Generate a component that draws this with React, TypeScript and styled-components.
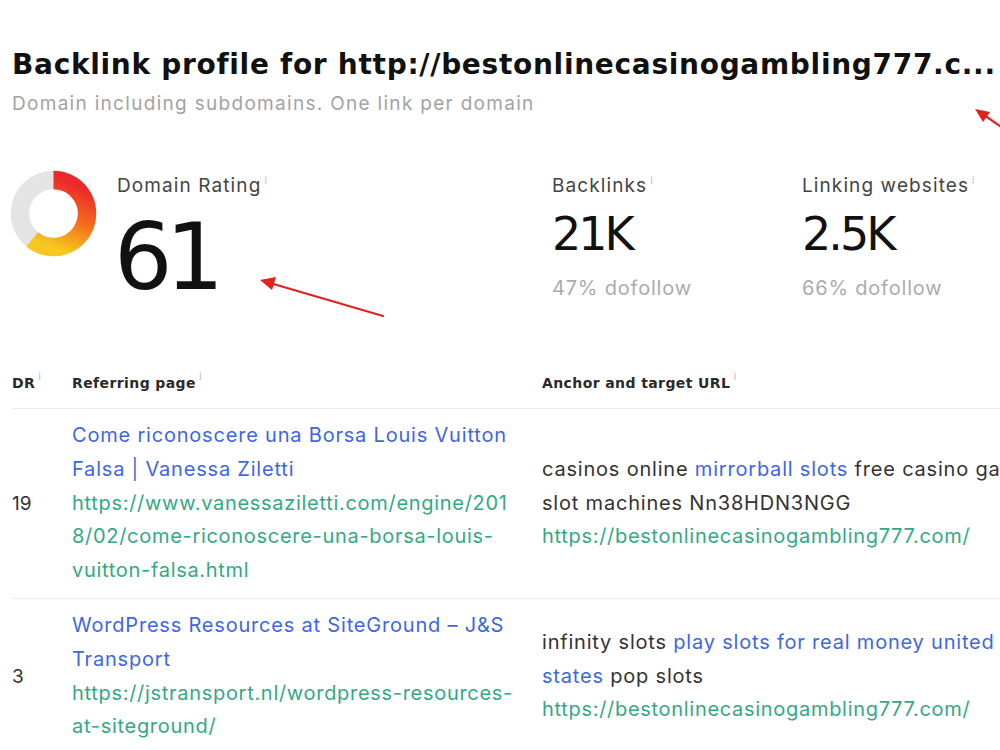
import React from 'react';
import styled, { createGlobalStyle } from 'styled-components';

const GlobalStyle = createGlobalStyle`
  html, body {
    margin: 0;
    padding: 0;
    background: #ffffff;
    overflow: hidden;
  }
  body {
    font-family: Inter, "Noto Sans", "Liberation Sans", sans-serif;
    color: #333333;
  }
`;

interface AnchorPart {
  text: string;
  link?: boolean;
}
interface BacklinkRow {
  dr: number;
  title: string;
  url: string;
  anchor: AnchorPart[];
  target: string;
}

const rows: BacklinkRow[] = [
  {
    dr: 19,
    title: 'Come riconoscere una Borsa Louis Vuitton Falsa | Vanessa Ziletti',
    url: 'https://www.vanessaziletti.com/engine/2018/02/come-riconoscere-una-borsa-louis-vuitton-falsa.html',
    anchor: [
      { text: 'casinos online ' },
      { text: 'mirrorball slots', link: true },
      { text: ' free casino games slot machines Nn38HDN3NGG' },
    ],
    target: 'https://bestonlinecasinogambling777.com/',
  },
  {
    dr: 3,
    title: 'WordPress Resources at SiteGround – J&S Transport',
    url: 'https://jstransport.nl/wordpress-resources-at-siteground/',
    anchor: [
      { text: 'infinity slots ' },
      { text: 'play slots for real money united states', link: true },
      { text: ' pop slots' },
    ],
    target: 'https://bestonlinecasinogambling777.com/',
  },
];

const Page = styled.div`
  position: relative;
  width: 1000px;
  height: 750px;
  padding: 45px 0 0 12px;
  box-sizing: border-box;
  overflow: hidden;
`;

const Title = styled.h1`
  margin: 0;
  font-family: "DejaVu Sans", Inter, sans-serif;
  font-size: 28px;
  font-weight: 700;
  line-height: 40px;
  color: #111111;
  white-space: nowrap;
  letter-spacing: 0.7px;
`;

const Subtitle = styled.p`
  margin: 0;
  font-size: 19px;
  line-height: 38px;
  letter-spacing: 1.3px;
  color: #a3a3a3;
`;

const Stats = styled.div`
  display: grid;
  grid-template-columns: 540px 250px 1fr;
  margin-top: 41px;
  height: 195px;
`;

const RatingBlock = styled.div`
  display: flex;
  gap: 20px;
  align-items: flex-start;
`;

const DonutWrap = styled.div`
  flex-shrink: 0;
  margin: 6px 0 0 -2px;
  width: 87px;
  height: 87px;
`;

const StatBlock = styled.div`
  display: flex;
  flex-direction: column;
`;

const StatLabel = styled.div`
  font-size: 19px;
  line-height: 32px;
  letter-spacing: 1.1px;
  color: #444444;
  white-space: nowrap;
`;

const Info = styled.sup`
  font-size: 10px;
  color: #bbbbbb;
  margin-left: 3px;
  vertical-align: 8px;
  letter-spacing: 0;
  font-weight: 400;
`;

const BigNumber = styled.div`
  font-family: "DejaVu Sans", sans-serif;
  font-size: 92px;
  line-height: 100px;
  letter-spacing: -7px;
  color: #111111;
  margin: 6px 0 0 -3px;
`;

const Number = styled.div`
  font-family: "DejaVu Sans", sans-serif;
  font-size: 46px;
  line-height: 52px;
  letter-spacing: -3px;
  color: #111111;
  margin-top: 6px;
`;

const SubValue = styled.div`
  font-size: 20px;
  line-height: 40px;
  letter-spacing: 0.8px;
  color: #ababab;
  margin-top: 8px;
`;

const Table = styled.div`
  width: 1047px;
`;

const Row = styled.div<{ header?: boolean }>`
  display: grid;
  grid-template-columns: 60px 470px 517px;
  align-items: center;
  border-bottom: 1px solid #ececec;
  padding: ${(p) => (p.header ? '8px 0 15px' : '10px 0 10px')};
`;

const HeadCell = styled.div`
  font-family: "DejaVu Sans", Roboto, sans-serif;
  font-size: 14px;
  font-weight: 700;
  letter-spacing: 0.4px;
  color: #2a2a2a;
  line-height: 20px;
  white-space: nowrap;
`;

const DrCell = styled.div`
  font-size: 19px;
  color: #333333;
`;

const TextCell = styled.div<{ last?: boolean }>`
  font-size: 20px;
  line-height: 33.8px;
  letter-spacing: 0.8px;
  padding-right: ${(p) => (p.last ? '2px' : '24px')};
  overflow-wrap: anywhere;
`;

const LinkTitle = styled.div`
  color: #3d67e3;
`;

const Url = styled.div`
  color: #33a985;
  letter-spacing: 0.7px;
`;

const AnchorText = styled.span<{ link?: boolean }>`
  color: ${(p) => (p.link ? '#3d67e3' : '#333333')};
`;

const Arrows = styled.svg`
  position: absolute;
  left: 0;
  top: 0;
  pointer-events: none;
`;

function Donut() {
  const cx = 43.5;
  const cy = 43.5;
  const r = 33.5;
  const angle = (61 / 100) * Math.PI * 2;
  const ex = cx + r * Math.sin(angle);
  const ey = cy - r * Math.cos(angle);
  return (
    <DonutWrap>
      <svg width="87" height="87" viewBox="0 0 87 87">
        <defs>
          <linearGradient id="drGrad" x1="0.55" y1="0" x2="0.25" y2="0.95">
            <stop offset="0" stopColor="#ea2a2a" />
            <stop offset="0.5" stopColor="#f66a1c" />
            <stop offset="1" stopColor="#f6c71f" />
          </linearGradient>
        </defs>
        <circle cx={cx} cy={cy} r={r} fill="none" stroke="#e4e4e4" strokeWidth="18.5" />
        <path
          d={`M ${cx} ${cy - r} A ${r} ${r} 0 1 1 ${ex} ${ey}`}
          fill="none"
          stroke="url(#drGrad)"
          strokeWidth="18.5"
        />
      </svg>
    </DonutWrap>
  );
}

function App() {
  return (
    <>
      <GlobalStyle />
      <Page>
        <Title>Backlink profile for http://bestonlinecasinogambling777.c...</Title>
        <Subtitle>Domain including subdomains. One link per domain</Subtitle>
        <Stats>
          <RatingBlock>
            <Donut />
            <StatBlock>
              <StatLabel>
                Domain Rating
                <Info>i</Info>
              </StatLabel>
              <BigNumber>61</BigNumber>
            </StatBlock>
          </RatingBlock>
          <StatBlock>
            <StatLabel>
              Backlinks
              <Info>i</Info>
            </StatLabel>
            <Number>21K</Number>
            <SubValue>47% dofollow</SubValue>
          </StatBlock>
          <StatBlock>
            <StatLabel>
              Linking websites
              <Info>i</Info>
            </StatLabel>
            <Number>2.5K</Number>
            <SubValue>66% dofollow</SubValue>
          </StatBlock>
        </Stats>
        <Table>
          <Row header>
            <HeadCell>
              DR
              <Info>i</Info>
            </HeadCell>
            <HeadCell>
              Referring page
              <Info>i</Info>
            </HeadCell>
            <HeadCell>
              Anchor and target URL
              <Info>i</Info>
            </HeadCell>
          </Row>
          {rows.map((row) => (
            <Row key={row.url}>
              <DrCell>{row.dr}</DrCell>
              <TextCell>
                <LinkTitle>{row.title}</LinkTitle>
                <Url>{row.url}</Url>
              </TextCell>
              <TextCell last>
                <div>
                  {row.anchor.map((part) => (
                    <AnchorText key={part.text} link={part.link}>
                      {part.text}
                    </AnchorText>
                  ))}
                </div>
                <Url>{row.target}</Url>
              </TextCell>
            </Row>
          ))}
        </Table>
        <Arrows width="1000" height="750" viewBox="0 0 1000 750">
          <g stroke="#e3211f" strokeWidth="2.2" fill="#e3211f" strokeLinecap="round">
            <line x1="383" y1="316" x2="270" y2="283" />
            <polygon points="260,280 276,277 272,290" stroke="none" />
            <line x1="1000" y1="126" x2="984" y2="115" />
            <polygon points="975,109 990,112 983,122" stroke="none" />
          </g>
        </Arrows>
      </Page>
    </>
  );
}

export default App;
